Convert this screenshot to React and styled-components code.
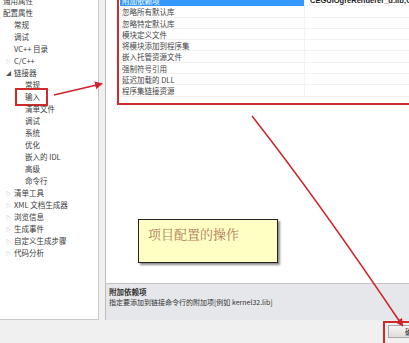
import React from 'react';
import styled, { createGlobalStyle } from 'styled-components';

const GlobalStyle = createGlobalStyle`
  html, body {
    margin: 0;
    padding: 0;
    background: #f0f0f0;
    overflow: hidden;
  }
  body {
    font-family: "Noto Sans CJK SC", "Noto Sans", sans-serif;
  }
`;

const Frame = styled.div`
  position: relative;
  width: 409px;
  height: 343px;
  overflow: hidden;
  display: grid;
  grid-template-columns: 99px 304px;
  grid-template-rows: 320px 23px;
  column-gap: 6px;
  background: #f0f0f0;
`;

const TreePanel = styled.div`
  background: #ffffff;
  border-right: 1px solid #c9c9c9;
  border-bottom: 1px solid #c9c9c9;
  overflow: hidden;
`;

const TreeList = styled.div`
  margin-top: -5px;
`;

const TreeRow = styled.div`
  position: relative;
  height: 12px;
  line-height: 12px;
  font-size: 7.5px;
  color: #3a3a3a;
  white-space: nowrap;
  padding-left: ${p => 3 + p.$level * 11}px;
`;

const Toggle = styled.span`
  position: absolute;
  left: 6px;
  top: 0;
  font-size: 5px;
  color: ${p => (p.$open ? '#555' : '#a8a8a8')};
`;

const Marked = styled.span`
  display: inline-block;
  margin-left: -6px;
  padding: 0 4px 0 6px;
  outline: 2px solid #d02a2a;
  outline-offset: 2px;
  line-height: 10px;
`;

const RightPanel = styled.div`
  display: flex;
  flex-direction: column;
  background: #ffffff;
  border-left: 1px solid #bdbdbd;
  overflow: hidden;
`;

const PropArea = styled.div`
  flex: 1;
  padding-left: 11px;
`;

const PropBox = styled.div`
  margin-top: -8px;
  margin-right: -30px;
  border: 2px solid #d02a2a;
  padding: 1px 0 6px 1px;
`;

const PropRow = styled.div`
  display: grid;
  grid-template-columns: 187px 1fr;
  height: 11.3px;
  line-height: 11.3px;
  font-size: 7.5px;
  color: #444;
  border-bottom: 1px solid #f1f1f1;
  box-sizing: border-box;
`;

const PropName = styled.div`
  padding-left: 2px;
  white-space: nowrap;
  background: ${p => (p.$selected ? '#3399ff' : 'transparent')};
  color: ${p => (p.$selected ? '#ffffff' : '#444')};
  border-right: 1px solid #f1f1f1;
  margin-right: 2px;
`;

const PropValue = styled.div`
  padding-left: 3px;
  white-space: nowrap;
  overflow: hidden;
  font-family: "Liberation Sans", Arial, sans-serif;
  font-weight: bold;
  color: #222;
`;

const DescBox = styled.div`
  height: 37px;
  box-sizing: border-box;
  background: #e6e7ea;
  border-top: 1px solid #c4c4c4;
  padding: 3px 3px;
  font-size: 7px;
  color: #333;
  line-height: 10px;
`;

const DescTitle = styled.div`
  font-weight: bold;
  font-size: 7.5px;
`;

const BottomBar = styled.div`
  grid-column: 1 / -1;
  display: flex;
  justify-content: flex-end;
  align-items: flex-end;
`;

const ButtonMark = styled.div`
  margin-right: -27px;
  border: 2px solid #d02a2a;
  border-right: none;
  border-bottom: none;
  padding: 2px 0 3px 3px;
  height: 15px;
`;

const OkButton = styled.div`
  width: 48px;
  height: 13px;
  box-sizing: border-box;
  border: 1px solid #a8a8a8;
  border-right: none;
  background: linear-gradient(#f6f6f6, #dcdcdc);
  font-size: 7.5px;
  line-height: 11px;
  padding-left: 16px;
  color: #222;
`;

const Note = styled.div`
  position: absolute;
  left: 138px;
  top: 219px;
  width: 140px;
  height: 44px;
  box-sizing: border-box;
  background: #ffffc4;
  border: 1px solid #222;
  box-shadow: 2px 2px 2px rgba(0, 0, 0, 0.45);
  padding: 4px 9px;
  font-family: "Noto Serif CJK SC", "Liberation Serif", serif;
  font-size: 13px;
  line-height: 20px;
  color: #b07a5a;
`;

const Overlay = styled.svg`
  position: absolute;
  left: 0;
  top: 0;
  pointer-events: none;
`;

const tree = [
  { label: '通用属性', level: 0 },
  { label: '配置属性', level: 0 },
  { label: '常规', level: 1 },
  { label: '调试', level: 1 },
  { label: 'VC++ 目录', level: 1 },
  { label: 'C/C++', level: 1, toggle: 'closed' },
  { label: '链接器', level: 1, toggle: 'open' },
  { label: '常规', level: 2 },
  { label: '输入', level: 2, marked: true },
  { label: '清单文件', level: 2 },
  { label: '调试', level: 2 },
  { label: '系统', level: 2 },
  { label: '优化', level: 2 },
  { label: '嵌入的 IDL', level: 2 },
  { label: '高级', level: 2 },
  { label: '命令行', level: 2 },
  { label: '清单工具', level: 1, toggle: 'closed' },
  { label: 'XML 文档生成器', level: 1, toggle: 'closed' },
  { label: '浏览信息', level: 1, toggle: 'closed' },
  { label: '生成事件', level: 1, toggle: 'closed' },
  { label: '自定义生成步骤', level: 1, toggle: 'closed' },
  { label: '代码分析', level: 1, toggle: 'closed' },
];

const props = [
  { name: '附加依赖项', value: 'CEGUIOgreRenderer_d.lib;OgreMain_d.lib', selected: true },
  { name: '忽略所有默认库' },
  { name: '忽略特定默认库' },
  { name: '模块定义文件' },
  { name: '将模块添加到程序集' },
  { name: '嵌入托管资源文件' },
  { name: '强制符号引用' },
  { name: '延迟加载的 DLL' },
  { name: '程序集链接资源' },
];

export default function App() {
  return (
    <>
      <GlobalStyle />
      <Frame>
        <TreePanel>
          <TreeList>
            {tree.map((item, i) => (
              <TreeRow key={i} $level={item.level}>
                {item.toggle && (
                  <Toggle $open={item.toggle === 'open'}>
                    {item.toggle === 'open' ? '◢' : '▷'}
                  </Toggle>
                )}
                {item.marked ? <Marked>{item.label}</Marked> : item.label}
              </TreeRow>
            ))}
          </TreeList>
        </TreePanel>

        <RightPanel>
          <PropArea>
            <PropBox>
              {props.map((p, i) => (
                <PropRow key={i}>
                  <PropName $selected={p.selected}>{p.name}</PropName>
                  <PropValue>{p.value}</PropValue>
                </PropRow>
              ))}
            </PropBox>
          </PropArea>
          <DescBox>
            <DescTitle>附加依赖项</DescTitle>
            <div>指定要添加到链接命令行的附加项[例如 kernel32.lib]</div>
          </DescBox>
        </RightPanel>

        <BottomBar>
          <ButtonMark>
            <OkButton>确定</OkButton>
          </ButtonMark>
        </BottomBar>

        <Note>项目配置的操作</Note>

        <Overlay width="409" height="343" viewBox="0 0 409 343">
          <defs>
            <marker id="head" markerWidth="8" markerHeight="8" refX="6" refY="4" orient="auto" markerUnits="userSpaceOnUse">
              <path d="M0,0 L8,4 L0,8 Z" fill="#d0222a" />
            </marker>
          </defs>
          <line x1="54" y1="95" x2="101" y2="84" stroke="#d0222a" strokeWidth="1.6" markerEnd="url(#head)" />
          <path d="M252,116 Q318,200 402,325" fill="none" stroke="#d0222a" strokeWidth="1.5" markerEnd="url(#head)" />
        </Overlay>
      </Frame>
    </>
  );
}
